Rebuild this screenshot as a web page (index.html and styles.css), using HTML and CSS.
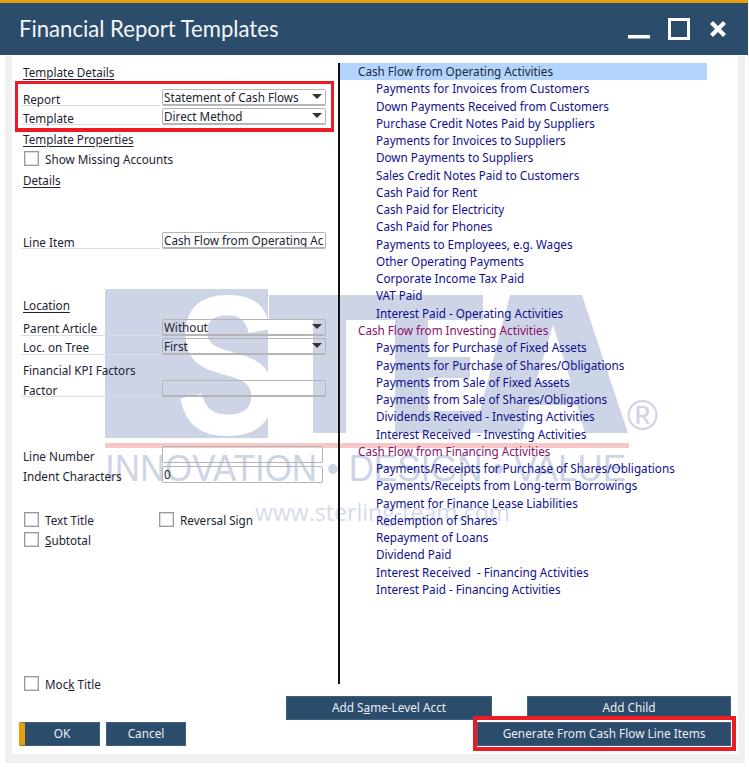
FILE: index.html
```html
<!DOCTYPE html>
<html lang="en">
<head>
<meta charset="utf-8">
<title>Financial Report Templates</title>
<link rel="stylesheet" href="styles.css">
</head>
<body>
<div class="win">
  <header class="titlebar">
    <h1 class="title">Financial Report Templates</h1>
    <div class="winctl">
      <svg width="22" height="4" viewBox="0 0 22 4"><rect y="0" width="22" height="3.5" fill="#fff"/></svg>
      <svg width="22" height="22" viewBox="0 0 22 22"><rect x="1.5" y="1.5" width="19" height="19" fill="none" stroke="#fff" stroke-width="3"/></svg>
      <svg width="16" height="16" viewBox="0 0 16 16"><path d="M1.5 1.5 14.5 14.5M14.5 1.5 1.5 14.5" stroke="#fff" stroke-width="4.2" fill="none"/></svg>
    </div>
  </header>
  <div class="frame">
    <div class="content">
      <svg class="watermark" width="749" height="767" viewBox="0 0 749 767">
        <rect x="105" y="289" width="163" height="149" fill="#cdd4e6"/>
        <text class="wm-s" transform="translate(176 434) scale(.78 1)">S</text>
        <path fill="#cdd4e6" d="M269 295H483V320H428V357H470V378H428V411H480L510 295H582L628 433H585L577 405H530L522 433H395V320H346V433H313V320H269ZM536 382H571L553 325Z"/>
        <rect x="105" y="443" width="524" height="5" fill="#f8c8c8"/>
        <text class="wm-tag" x="105" y="481" textLength="521" lengthAdjust="spacingAndGlyphs">INNOVATION • DESIGN • VALUE</text>
        <text class="wm-url" x="255" y="521" textLength="255" lengthAdjust="spacingAndGlyphs">www.sterling-team.com</text>
        <text class="wm-reg" x="627" y="430">®</text>
      </svg>
      <div class="panes">
        <form class="form">
          <div class="heading"><span>Template Details</span></div>
          <div class="row gap-9"><span class="label">Report</span><div class="field select">Statement of Cash Flows</div></div>
          <div class="row gap-2"><span class="label">Template</span><div class="field select">Direct Method</div></div>
          <div class="heading gap-5"><span>Template Properties</span></div>
          <label class="check gap-3"><span class="box"></span>Show Missing Accounts</label>
          <div class="heading gap-4"><span>Details</span></div>
          <div class="row gap-44"><span class="label">Line Item</span><div class="field clip">Cash Flow from Operating Ac</div></div>
          <div class="heading gap-47"><span>Location</span></div>
          <div class="row gap-6"><span class="label tight">Parent Article</span><div class="field select">Without</div></div>
          <div class="row gap-2"><span class="label tight">Loc. on Tree</span><div class="field select">First</div></div>
          <div class="plain gap-6">Financial KPI Factors</div>
          <div class="row gap-2"><span class="label">Factor</span><div class="field"></div></div>
          <div class="row gap-49"><span class="label nolined">Line Number</span><div class="field short"></div></div>
          <div class="row gap-3"><span class="label nolined">Indent Characters</span><div class="field short">0</div></div>
          <div class="checks gap-28">
            <label class="check"><span class="box"></span>Text Title</label>
            <label class="check"><span class="box"></span>Reversal Sign</label>
          </div>
          <label class="check gap-3"><span class="box"></span><span><u>S</u>ubtotal</span></label>
          <label class="check mock"><span class="box"></span><span>Moc<u>k</u> Title</span></label>
        </form>
        <div class="divider"></div>
        <ul class="tree">
          <li class="group selected">Cash Flow from Operating Activities</li>
          <li>Payments for Invoices from Customers</li>
          <li>Down Payments Received from Customers</li>
          <li>Purchase Credit Notes Paid by Suppliers</li>
          <li>Payments for Invoices to Suppliers</li>
          <li>Down Payments to Suppliers</li>
          <li>Sales Credit Notes Paid to Customers</li>
          <li>Cash Paid for Rent</li>
          <li>Cash Paid for Electricity</li>
          <li>Cash Paid for Phones</li>
          <li>Payments to Employees, e.g. Wages</li>
          <li>Other Operating Payments</li>
          <li>Corporate Income Tax Paid</li>
          <li>VAT Paid</li>
          <li>Interest Paid - Operating Activities</li>
          <li class="group">Cash Flow from Investing Activities</li>
          <li>Payments for Purchase of Fixed Assets</li>
          <li>Payments for Purchase of Shares/Obligations</li>
          <li>Payments from Sale of Fixed Assets</li>
          <li>Payments from Sale of Shares/Obligations</li>
          <li>Dividends Received - Investing Activities</li>
          <li>Interest Received&nbsp; - Investing Activities</li>
          <li class="group">Cash Flow from Financing Activities</li>
          <li>Payments/Receipts for Purchase of Shares/Obligations</li>
          <li>Payments/Receipts from Long-term Borrowings</li>
          <li>Payment for Finance Lease Liabilities</li>
          <li>Redemption of Shares</li>
          <li>Repayment of Loans</li>
          <li>Dividend Paid</li>
          <li>Interest Received&nbsp; - Financing Activities</li>
          <li>Interest Paid - Financing Activities</li>
        </ul>
      </div>
      <div class="actions">
        <button class="btn wide" type="button">Add S<u>a</u>me-Level Acct</button>
        <button class="btn wide child" type="button">Add Child</button>
      </div>
      <div class="actions bottom">
        <button class="btn ok" type="button">OK</button>
        <button class="btn cancel" type="button">Cancel</button>
        <button class="btn generate" type="button">Generate From Cash Flow Line Items</button>
      </div>
      <div class="mark mark-report"></div>
      <div class="mark mark-generate"></div>
    </div>
  </div>
</div>
</body>
</html>
```
FILE: styles.css
```css
* { box-sizing: border-box; }
html, body { margin: 0; padding: 0; background: #fff; }
body {
  font-family: "Noto Sans", "DejaVu Sans", sans-serif;
  font-size: 11.7px;
  color: #1c2430;
  overflow: hidden;
}
.win { width: 748px; height: 763px; display: flex; flex-direction: column; }

.titlebar {
  height: 56px;
  flex: none;
  background: #2c4c6c;
  border-top: 3px solid #e89f0c;
  border-bottom: 1px solid #fff;
  display: flex;
  align-items: center;
  justify-content: space-between;
  padding: 0 22px 0 19px;
}
.title { margin: 0; font: 400 22.1px/1 Lato, "Open Sans", sans-serif; color: #f2f5f8; }
.winctl { display: flex; align-items: center; gap: 20px; }
.winctl svg:first-child { align-self: flex-end; margin: 0 -2px 1px 0; }

.frame {
  flex: 1;
  margin: 0 3px 0 5px;
  padding: 0 7px 9px;
  background: #f0f0f0;
  display: flex;
}
.content { position: relative; flex: 1; background: #fff; display: flex; flex-direction: column; }
.watermark { position: absolute; left: -12px; top: -56px; }
.wm-s { font: 700 198px "Liberation Sans", sans-serif; fill: #fff; }
.wm-tag { font: 400 37px "Liberation Sans", sans-serif; fill: #cdd4e6; }
.wm-url { font: 400 24px "Open Sans", sans-serif; fill: #d6dbea; }
.wm-reg { font: 400 42px "Liberation Sans", sans-serif; fill: #cdd4e6; }

.panes { position: relative; display: flex; height: 636px; padding-top: 7px; }
.form { width: 305px; margin-left: 9px; height: 629px; display: flex; flex-direction: column; flex: none; }
.heading, .plain, .row, .check { height: 17px; flex: none; }
.heading, .plain { line-height: 18px; padding-left: 2px; }
.heading span { text-decoration: underline; text-underline-offset: 2px; }
.row { display: flex; gap: 2px; align-items: stretch; }
.label { width: 139px; flex: none; padding-left: 2px; line-height: 20px; border-bottom: 1px solid #dcdfe3; }
.label.tight { line-height: 18px; }
.label.nolined { border-bottom: 0; }
.field {
  flex: 1;
  min-width: 0;
  position: relative;
  border: 1px solid #b5b5b5;
  border-bottom-width: 2px;
  border-radius: 2px;
  padding-left: 1px;
  line-height: 15px;
  white-space: nowrap;
  overflow: hidden;
}
.field.short { flex: none; width: 161px; border-bottom-width: 1px; }
.select::after {
  content: "";
  position: absolute;
  right: 3px;
  top: 4px;
  border-left: 5px solid transparent;
  border-right: 5px solid transparent;
  border-top: 5px solid #333;
}
.check { display: flex; align-items: center; gap: 6px; padding: 2px 0 0 3px; line-height: 15px; }
.box { width: 15px; height: 15px; margin-top: -2px; border: 1px solid #999; box-shadow: inset 0 0 0 .5px #bbb; background: #fff; flex: none; }
.checks { display: flex; }
.checks .check:first-child { width: 135px; }
.mock { margin-top: auto; }

.gap-2 { margin-top: 2px; }
.gap-3 { margin-top: 3px; }
.gap-4 { margin-top: 4px; }
.gap-5 { margin-top: 5px; }
.gap-6 { margin-top: 6px; }
.gap-9 { margin-top: 9px; }
.gap-28 { margin-top: 28px; }
.gap-44 { margin-top: 44px; }
.gap-47 { margin-top: 47px; }
.gap-49 { margin-top: 49px; }

.divider { width: 2px; height: 621px; background: #111; margin-left: 12px; flex: none; }
.tree { list-style: none; margin: 0; padding: 0; width: 367px; }
.tree li { height: 17.27px; line-height: 17px; padding-left: 36px; color: #0f0f8c; white-space: nowrap; }
.tree .group { padding-left: 18px; color: #8a0f6e; }
.tree .selected { background: #b3d4fc; color: #1c2a3a; }

.actions { position: relative; display: flex; justify-content: flex-end; gap: 35px; padding: 4px 7px 0 274px; }
.actions.bottom { justify-content: flex-start; gap: 6px; padding: 2px 7px 0 7px; }
.btn {
  height: 24px;
  padding: 0;
  border: 1px solid #3d5f80;
  background: #2c4c6c;
  color: #e9eef3;
  font: 11.8px/1 "Noto Sans", "DejaVu Sans", sans-serif;
  white-space: nowrap;
}
.wide { width: 206px; }
.child { width: 204px; }
.ok { width: 81px; border-left: 6px solid #e89f0c; }
.cancel { width: 80px; }
.generate { width: 254px; margin-left: auto; }

.mark { position: absolute; border: 4px solid #ed1c24; pointer-events: none; }
.mark-report { left: 3px; top: 25px; width: 319px; height: 51px; border-width: 3px 3px 4px; }
.mark-generate { left: 461px; top: 660px; width: 263px; height: 35px; }
```
